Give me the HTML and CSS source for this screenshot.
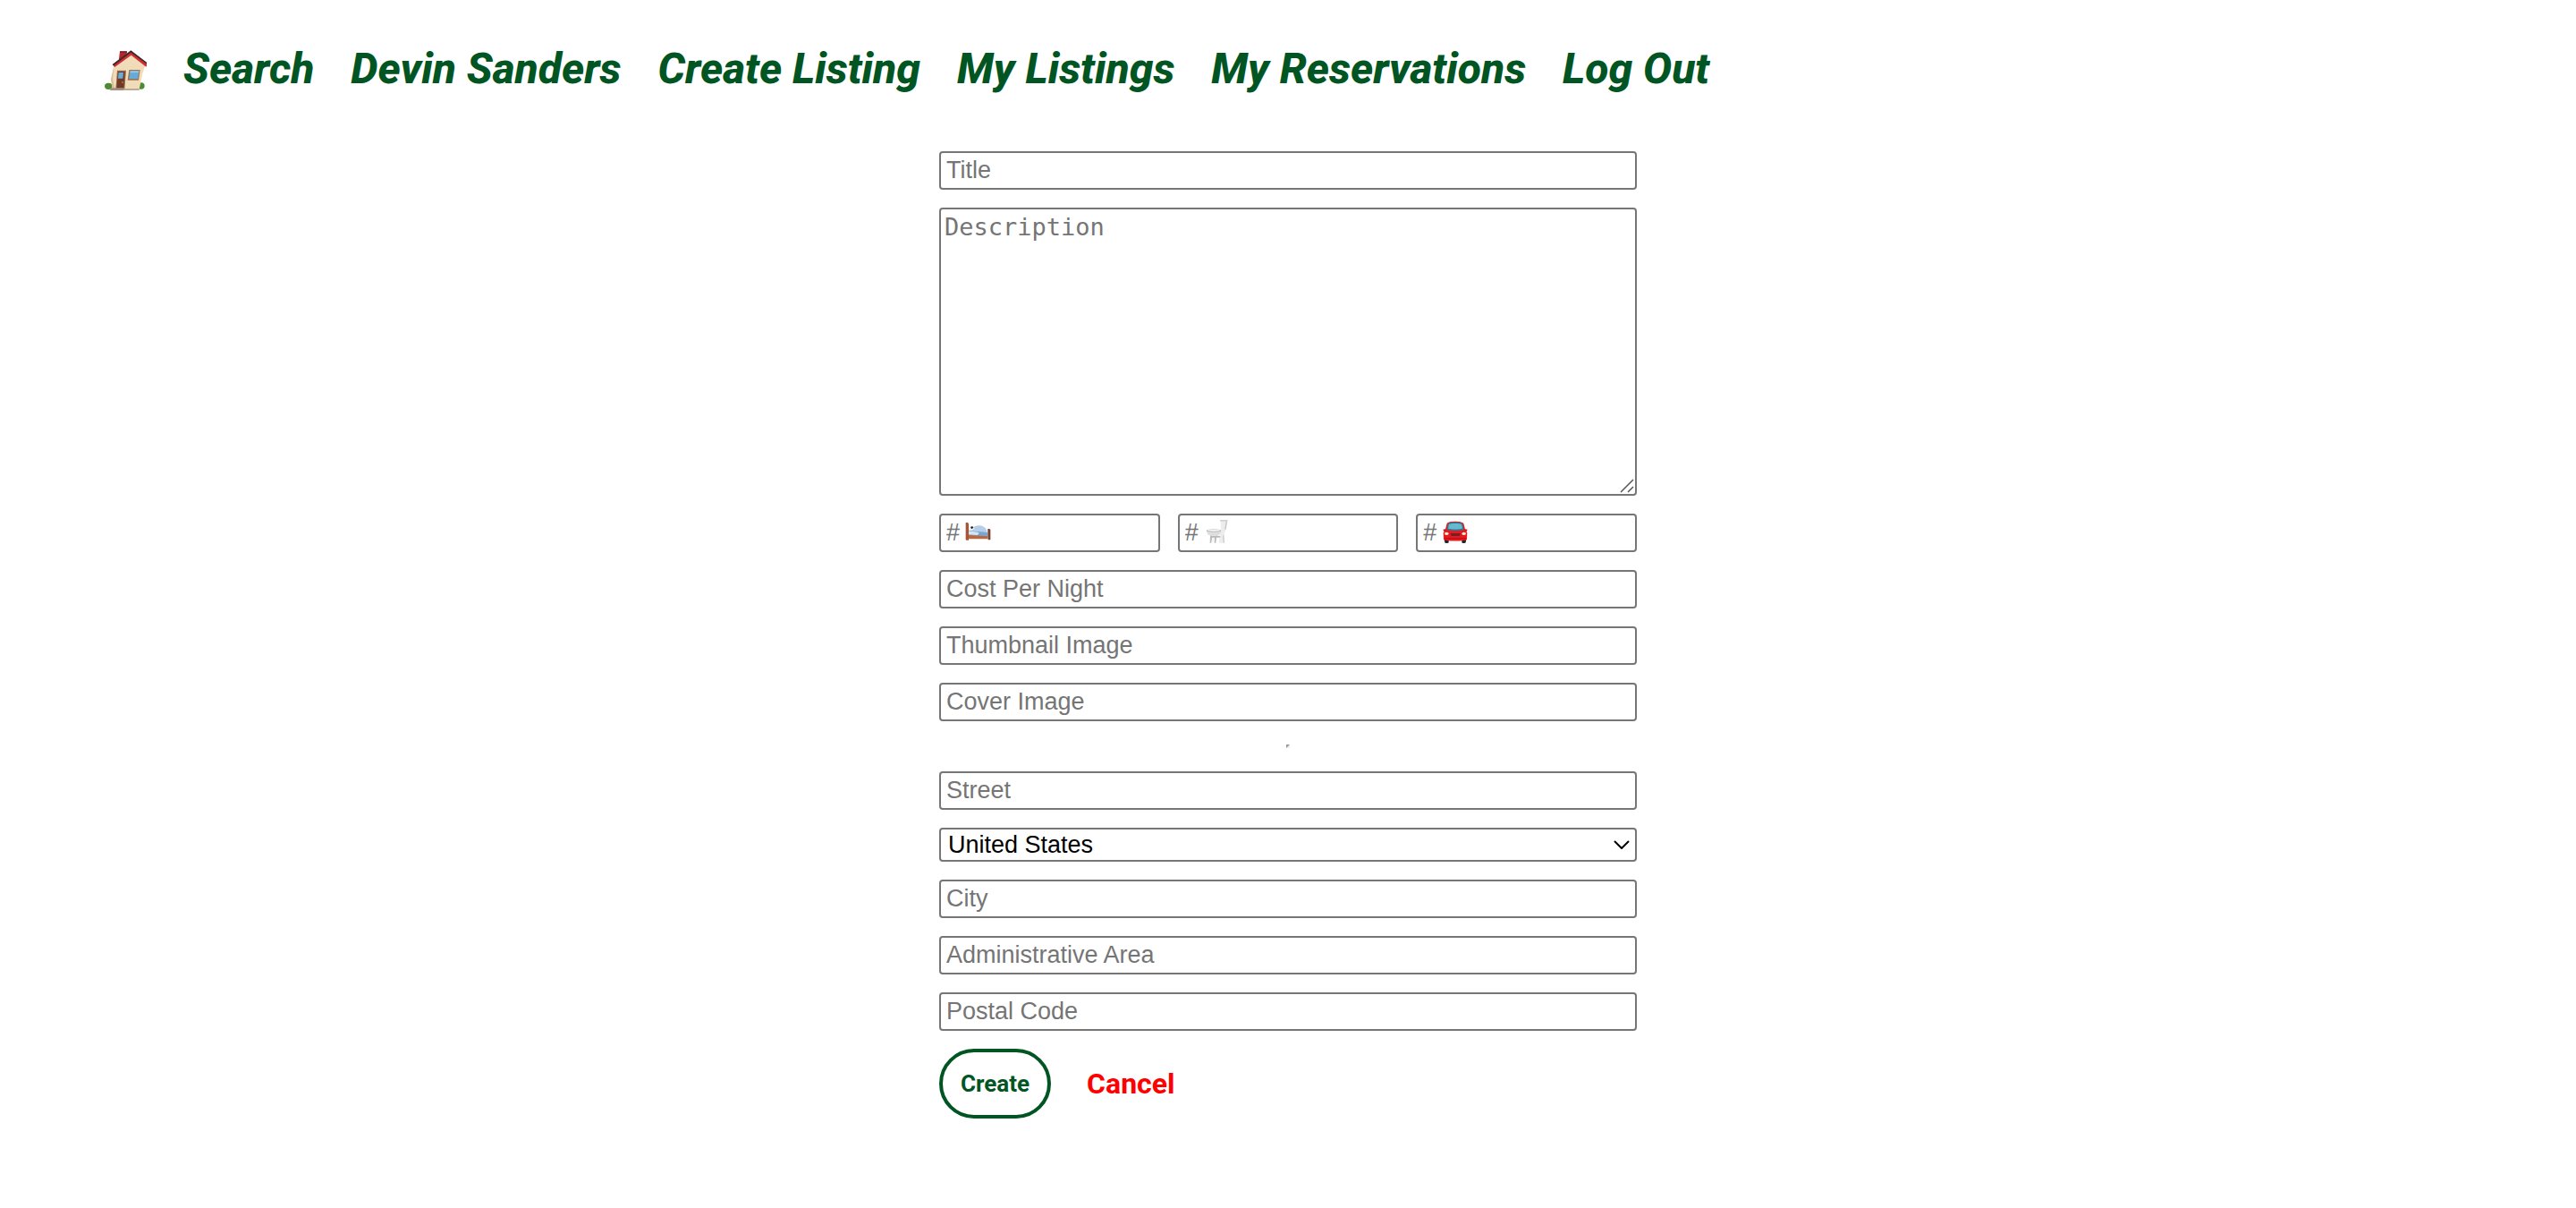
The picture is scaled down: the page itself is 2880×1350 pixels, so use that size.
FILE: index.html
```html
<!DOCTYPE html>
<html lang="en">
<head>
  <meta charset="utf-8">
  <title>Create Listing</title>
  <link rel="stylesheet" href="styles.css">
</head>
<body>
  <nav class="nav">
    <a class="nav-home" href="#" aria-label="Home">
      <svg class="house" viewBox="-30 0 192 192" aria-hidden="true">
        <ellipse cx="34" cy="154" rx="13" ry="11" fill="#4d8a32"/>
        <ellipse cx="143" cy="153" rx="12" ry="11" fill="#4d8a32"/>
        <path d="M72 37h24l-3 30-26 12z" fill="#b3262a"/>
        <path d="M72 37h24v5H72z" fill="#7d2226"/>
        <path d="M53 84 109 44l48 40-9 28-11 52H48l-5-28z" fill="#f1dcba"/>
        <path d="M53 84 48 130l7 34h-8l-5-34z" fill="#d9bd94"/>
        <path d="M47 82 109 35l57 44-6 10-50-39-55 40z" fill="#d32c32"/>
        <path d="M47 81 109 34l55 42-3 3-52-38-57 44z" fill="#3c2b2e"/>
        <path d="M63 101h30l-5 63H58z" fill="#9b6a49"/>
        <path d="M66 105h23l-4 57H61z" fill="#713a27"/>
        <path d="M68 108h16l-2 20H66z" fill="#67addb"/>
        <circle cx="81" cy="141" r="2" fill="#e6bd75"/>
        <path d="M103 99h37l-5 35h-37z" fill="#9d7453"/>
        <path d="M107 103h29l-4 26h-29z" fill="#64abdc"/>
        <path d="m107 103 29 0-1 6h-29z" fill="#8dc7ea"/>
        <path d="M42 160h46l-2 8H39z" fill="#a38e83"/>
        <path d="M88 163h49v4H87z" fill="#a99378"/>
      </svg>
    </a>
    <a href="#">Search</a>
    <a href="#">Devin Sanders</a>
    <a href="#">Create Listing</a>
    <a href="#">My Listings</a>
    <a href="#">My Reservations</a>
    <a href="#">Log Out</a>
  </nav>

  <main>
    <form class="form">
      <input class="field" type="text" placeholder="Title" aria-label="Title">
      <div class="holder">
        <textarea class="field area" placeholder="Description" aria-label="Description"></textarea>
        <svg class="grip" viewBox="0 0 16 16" aria-hidden="true">
          <path d="M1 15 15 1M9 15l6-6" fill="none" stroke="#555" stroke-width="1.5"/>
        </svg>
      </div>
      <div class="counts">
        <div class="holder">
          <input class="field" type="text" inputmode="numeric" placeholder="#" aria-label="Number of beds">
          <svg class="icon" viewBox="0 0 90 90" aria-hidden="true">
            <path d="M6 49h81v13H6z" fill="#a85a34"/>
            <path d="M5 15h7l3 4v55H7l-2-2z" fill="#a65632"/>
            <path d="M15 33h40l24 18v10H15z" fill="#9dbfe0"/>
            <path d="M79 36h6l3 3v34h-8V61h-1z" fill="#81402a"/>
            <path d="M26 36c9-16 43-16 50 7l3 16-36-7z" fill="#b4cee8"/>
            <path d="M15 46c20-2 44 0 65 3v14L15 57z" fill="#78a5d3"/>
            <path d="M15 45c13-1 25 1 35 4l-5 8-30-2z" fill="#d8e6f3"/>
            <path d="M15 33c4-6 10-4 17-5l2 7-7 6H15z" fill="#f4f6fa"/>
            <path d="M21 30c4-4 10-2 10 3l-7 4z" fill="#28292e"/>
            <path d="M15 57 80 61v9H15z" fill="#b86a3e"/>
          </svg>
        </div>
        <div class="holder">
          <input class="field" type="text" inputmode="numeric" placeholder="#" aria-label="Number of bathrooms">
          <svg class="icon" viewBox="0 0 90 90" aria-hidden="true">
            <path d="M59 8h22l-4 30H60z" fill="#ececec"/>
            <path d="M57 6h26v5H57z" fill="#d2d2d2"/>
            <path d="M77 11h4l-4 27h-4z" fill="#c4c4c4"/>
            <path d="M57 38h20l-7 18 2 27H54l2-24z" fill="#ececec"/>
            <path d="M70 54l2 29h-4l-2-24z" fill="#cfcfcf"/>
            <path d="M12 42h48c0 12-9 19-20 19H26C17 58 12 50 12 42z" fill="#dedede"/>
            <path d="M24 60h34l-1 5H45l-2 18h-5l1-16H30l-2 16h-5z" fill="#b9b9b9"/>
            <path d="M31 65h8l-1 14h-9z" fill="#f4f4f4"/>
            <ellipse cx="36" cy="42" rx="25" ry="5" fill="#bdbdbd"/>
            <ellipse cx="36" cy="41" rx="21" ry="3" fill="#f6f6f6"/>
          </svg>
        </div>
        <div class="holder">
          <input class="field" type="text" inputmode="numeric" placeholder="#" aria-label="Number of parking spots">
          <svg class="icon" viewBox="0 0 90 90" aria-hidden="true">
            <path d="M11 70h15v12c0 3-13 3-13 0zm59 0h15l-2 12c0 3-13 3-13 0z" fill="#252326"/>
            <path d="M20 18c5-9 50-9 56 0l6 23 6 8-1 22c-1 7-77 7-78 0L8 49l6-8z" fill="#ea171e"/>
            <path d="M24 19c8-6 40-6 48 0l4 20c-12 4-44 4-56 0z" fill="#287e99"/>
            <path d="M27 21c8-4 34-4 42 0l3 14c-10 3-38 3-48 0z" fill="#62bbd0"/>
            <path d="M7 38l8-1 2 6-7 2zm82 0-8-1-2 6 7 2z" fill="#c9181d"/>
            <ellipse cx="19" cy="52" rx="7" ry="5" fill="#f5f1dd"/>
            <ellipse cx="77" cy="52" rx="7" ry="5" fill="#f5f1dd"/>
            <path d="M31 51h35l-4 9H35z" fill="#702126"/>
            <path d="M13 66h70v4H13z" fill="#b81118"/>
          </svg>
        </div>
      </div>
      <input class="field" type="text" placeholder="Cost Per Night" aria-label="Cost Per Night">
      <input class="field" type="text" placeholder="Thumbnail Image" aria-label="Thumbnail Image">
      <input class="field" type="text" placeholder="Cover Image" aria-label="Cover Image">
      <hr class="divider">
      <input class="field" type="text" placeholder="Street" aria-label="Street">
      <div class="holder">
        <select class="field select" aria-label="Country">
          <option>United States</option>
        </select>
        <svg class="chevron" viewBox="0 0 18 10" aria-hidden="true">
          <path d="m1 1 8 8 8-8" fill="none" stroke="#000" stroke-width="2"/>
        </svg>
      </div>
      <input class="field" type="text" placeholder="City" aria-label="City">
      <input class="field" type="text" placeholder="Administrative Area" aria-label="Administrative Area">
      <input class="field" type="text" placeholder="Postal Code" aria-label="Postal Code">
      <div class="actions">
        <button class="create" type="submit">Create</button>
        <a class="cancel" href="#">Cancel</a>
      </div>
    </form>
  </main>
</body>
</html>
```
FILE: styles.css
```css
* {
  box-sizing: border-box;
}

body {
  margin: 0;
  background: #fff;
  font-family: Roboto, sans-serif;
}

.nav {
  display: flex;
  align-items: center;
  gap: 41px;
  padding: 45px 100px 60px;
  font-size: 48px;
  font-style: italic;
  font-weight: 800;
  line-height: 64px;
}

.nav a {
  color: #005523;
  text-decoration: none;
  white-space: nowrap;
}

.house {
  display: block;
  width: 64px;
  height: 64px;
}

.form {
  display: flex;
  flex-direction: column;
  gap: 20px;
  width: 100%;
  max-width: 780px;
  margin: 0 auto;
  padding-bottom: 100px;
}

.holder {
  position: relative;
  display: flex;
}

.field {
  display: block;
  width: 100%;
  min-width: 0;
  margin: 0;
  padding: 4px 6px;
  border: 2px solid #767676;
  border-radius: 4px;
  background: #fff;
  color: #000;
  font-family: "Liberation Sans", Arial, sans-serif;
  font-size: 27px;
  line-height: 31px;
}

.field::placeholder {
  color: #757575;
  opacity: 1;
}

.area {
  height: 322px;
  padding: 4px;
  font-family: "DejaVu Sans Mono", monospace;
  resize: none;
}

.grip {
  position: absolute;
  right: 3px;
  bottom: 3px;
  width: 16px;
  height: 16px;
}

.counts {
  display: grid;
  grid-template-columns: repeat(3, 1fr);
  gap: 20px;
}

.icon {
  position: absolute;
  top: 5px;
  left: 28px;
  width: 30px;
  height: 30px;
}

.divider {
  width: 4px;
  height: 4px;
  margin: 6px auto;
  border: 2px solid;
  border-color: #9a9a9a #eee #eee #9a9a9a;
}

.select {
  height: 38px;
  padding: 0 8px;
  appearance: none;
}

.chevron {
  position: absolute;
  top: 14px;
  right: 8px;
  width: 18px;
  height: 10px;
}

.actions {
  display: flex;
  align-items: center;
  gap: 40px;
}

.create {
  padding: 20px;
  border: 4px solid #005523;
  border-radius: 40px;
  background: #fff;
  color: #005523;
  font-family: Roboto, sans-serif;
  font-size: 26px;
  font-weight: 700;
  line-height: 30px;
}

.cancel {
  color: #f00;
  font-size: 32px;
  font-weight: 700;
  line-height: 38px;
  text-decoration: none;
}
```
